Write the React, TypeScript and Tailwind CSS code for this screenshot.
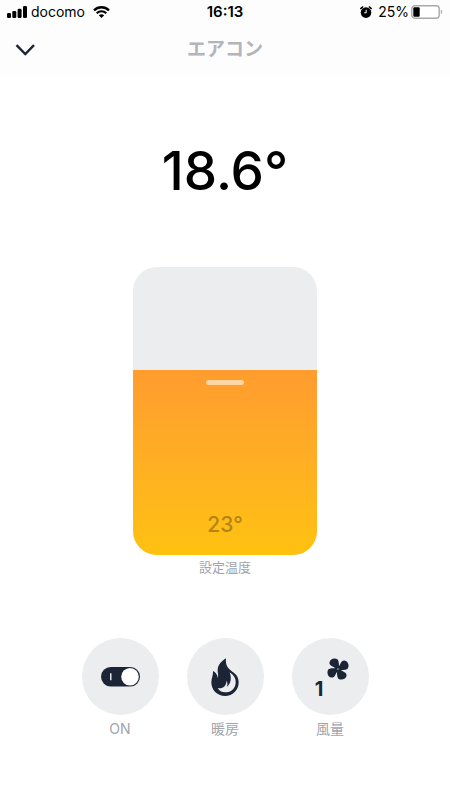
import React, { useState } from "react";

const MIN_TEMP = 16;
const MAX_TEMP = 27;

const SignalIcon = () => (
  <svg viewBox="0 0 20 12" className="w-5 h-3" fill="currentColor" aria-hidden="true">
    <rect x="0" y="7" width="4" height="5" rx="1.3" />
    <rect x="5.3" y="5" width="4" height="7" rx="1.3" />
    <rect x="10.6" y="2.8" width="4" height="9.2" rx="1.3" />
    <rect x="16" y="0" width="4" height="12" rx="1.3" />
  </svg>
);

const WifiIcon = () => (
  <svg viewBox="0 0 17 12" className="w-[17px] h-3" fill="none" stroke="currentColor" aria-hidden="true">
    <path d="M1 4.3C5.2 .2 11.8 .2 16 4.3" strokeWidth="2.4" />
    <path d="M3.7 7.2C6.4 4.6 10.6 4.6 13.3 7.2" strokeWidth="2.2" />
    <path d="M8.5 12L5.8 9.3C7.3 7.9 9.7 7.9 11.2 9.3Z" fill="currentColor" stroke="none" />
  </svg>
);

const AlarmIcon = () => (
  <svg viewBox="0 0 12 12" className="w-3 h-3" aria-hidden="true">
    <circle cx="6" cy="6.6" r="5.3" fill="currentColor" />
    <path d="M.7 2.6L2.7 .9M11.3 2.6L9.3 .9" stroke="currentColor" strokeWidth="1.4" strokeLinecap="round" />
    <path d="M6.2 3.8V6.8H4.2" stroke="white" strokeWidth="1" fill="none" />
  </svg>
);

const BatteryIcon = () => (
  <svg viewBox="0 0 32 14" className="w-8 h-3.5" aria-hidden="true">
    <rect x=".8" y=".8" width="27.4" height="12.4" rx="3" fill="white" stroke="#a9a9a9" strokeWidth="1.4" />
    <rect x="2.3" y="2.3" width="6.4" height="9.4" rx="1" fill="black" />
    <path d="M29.8 4.8C31.6 5.3 31.6 8.7 29.8 9.2Z" fill="#a9a9a9" />
  </svg>
);

const SwitchIcon = () => (
  <svg viewBox="0 0 39 20" className="w-[39px] h-5" aria-hidden="true">
    <rect width="39" height="19.5" rx="9.75" fill="#1c2536" />
    <path d="M9.8 6.3V13.2" stroke="white" strokeWidth="1.3" />
    <circle cx="29" cy="9.75" r="8.8" fill="white" />
  </svg>
);

const FlameIcon = () => (
  <svg viewBox="0 0 84 114" className="w-7 h-[38px]" aria-hidden="true">
    <path
      d="M45 1C43 22 50 31 64 41C77 49 83 59 83 73C83 97 65 114 42 114C18 114 1 96 1 73C1 60 7 52 6 39C15 44 20 51 20 60C24 52 19 45 20 36C21 18 32 10 45 1Z"
      fill="#1c2536"
    />
    <path
      d="M56 43C69 51 75 62 74 74C73 92 60 103 43 103C32 103 24 98 20 90C34 93 45 86 47 68C50 74 50 80 47 87C59 78 63 62 56 43Z"
      fill="#ecedef"
    />
  </svg>
);

const FAN_BLADE = "M36 32C34 24 36 10 31 4C23 -2 8 2 7 14C7 24 20 24 28 33Z";

const FanIcon = () => (
  <svg viewBox="0 0 64 64" className="size-[22px]" fill="currentColor" aria-hidden="true">
    {[0, 90, 180, 270].map((angle) => (
      <path key={angle} d={FAN_BLADE} transform={`rotate(${angle} 32 32)`} />
    ))}
    <circle cx="32" cy="32" r="7" />
    <circle cx="32" cy="32" r="2" fill="#ecedef" />
  </svg>
);

interface ModeButtonProps {
  label: string;
  children: React.ReactNode;
}

const ModeButton = ({ label, children }: ModeButtonProps) => (
  <button type="button" className="flex flex-col items-center gap-1 text-[#a1a4aa]">
    <span className="flex size-[77px] items-center justify-center rounded-full bg-[#ecedef] text-[#1c2536]">
      {children}
    </span>
    <span className="text-sm leading-5">{label}</span>
  </button>
);

export default function App() {
  const [target, setTarget] = useState(23);
  const level = ((target - MIN_TEMP + 0.07) / (MAX_TEMP - MIN_TEMP)) * 100;

  return (
    <div className="min-h-screen bg-white font-[Inter,'Noto_Sans_CJK_JP',sans-serif] text-black">
      <header className="bg-[#fdfdfd] pb-2.5">
        <div className="grid grid-cols-3 items-center px-[7px] pt-0.5 text-sm leading-5">
          <div className="flex items-center gap-1">
            <SignalIcon />
            <span>docomo</span>
            <span className="pl-1">
              <WifiIcon />
            </span>
          </div>
          <span className="text-center text-[15px] font-semibold">16:13</span>
          <div className="flex items-center justify-end gap-0.5">
            <span className="pr-1">
              <AlarmIcon />
            </span>
            <span>25%</span>
            <BatteryIcon />
          </div>
        </div>
        <div className="grid grid-cols-3 items-center px-3.5 pt-3">
          <button type="button" aria-label="閉じる" className="flex h-8 items-center text-[#1c2536]">
            <svg viewBox="0 0 22 14" className="w-[22px] h-3.5" fill="none" aria-hidden="true">
              <path d="M2.5 2.2L11.3 11L20 2.2" stroke="currentColor" strokeWidth="2.4" />
            </svg>
          </button>
          <h1 className="text-center text-[19px] font-bold leading-7 text-[#b3b5ba]">エアコン</h1>
        </div>
      </header>

      <main className="flex flex-col items-center pt-[63px]">
        <p className="text-[53px] font-medium leading-[64px]">18.6°</p>

        <div className="relative mt-16 flex h-72 w-[184px] flex-col justify-end overflow-hidden rounded-3xl bg-[#ecedef]">
          <div
            className="flex flex-col items-center justify-between bg-linear-to-b from-[#ff9c2e] to-[#ffc20e] pt-2.5 pb-4"
            style={{ height: `${level}%` }}
          >
            <div className="h-[5px] w-[38px] rounded-full bg-[#ffd5a3]" />
            <span className="text-[21px] font-medium leading-7 text-[#b3850f]">{target}°</span>
          </div>
          <input
            id="target"
            type="range"
            min={MIN_TEMP}
            max={MAX_TEMP}
            value={target}
            onChange={(e) => setTarget(Number(e.target.value))}
            className="absolute inset-0 h-full w-full cursor-pointer opacity-0 [direction:rtl] [writing-mode:vertical-lr]"
          />
        </div>
        <label htmlFor="target" className="mt-0.5 text-[13px] leading-5 text-[#a1a4aa]">
          設定温度
        </label>

        <div className="mt-[61px] flex gap-7 pb-8">
          <ModeButton label="ON">
            <SwitchIcon />
          </ModeButton>
          <ModeButton label="暖房">
            <FlameIcon />
          </ModeButton>
          <ModeButton label="風量">
            <span className="flex items-center gap-1 pl-1">
              <span className="pt-6 text-xl font-bold leading-6">1</span>
              <span className="pb-4">
                <FanIcon />
              </span>
            </span>
          </ModeButton>
        </div>
      </main>
    </div>
  );
}
